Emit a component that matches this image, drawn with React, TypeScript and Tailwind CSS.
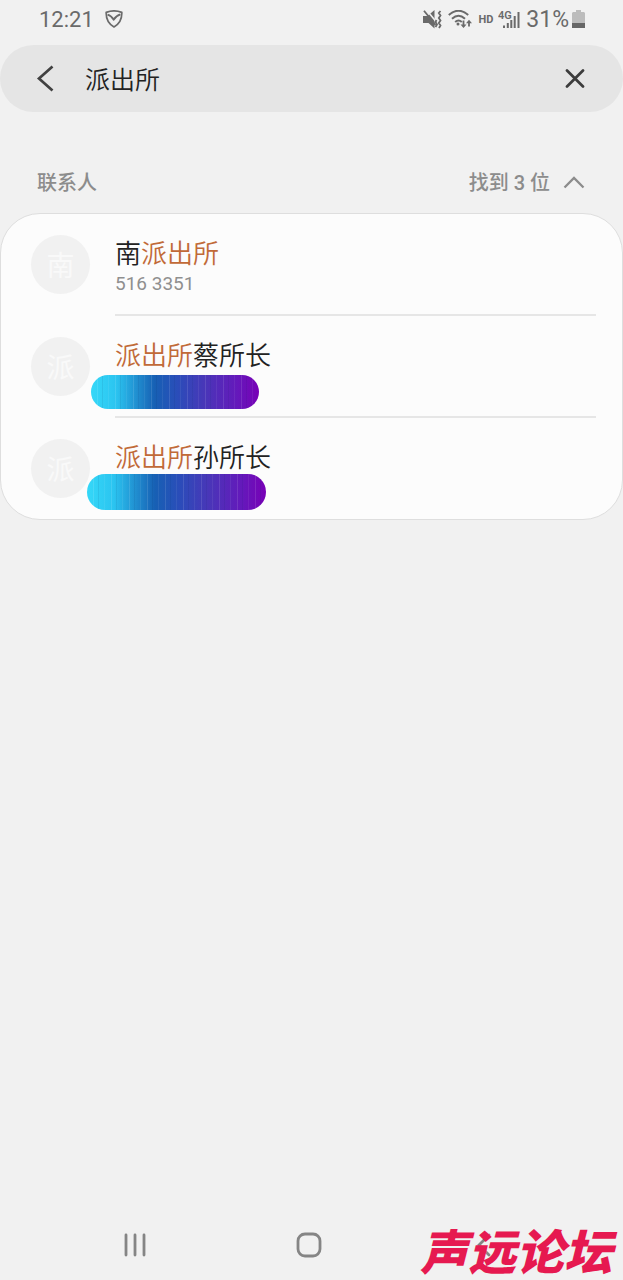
import React, { useState } from 'react';

type Contact = {
  id: string;
  initial: string;
  before?: string;
  match: string;
  after?: string;
  phone?: string;
  mask?: string;
};

const contacts: Contact[] = [
  { id: 'nan', initial: '南', before: '南', match: '派出所', phone: '516 3351' },
  { id: 'cai', initial: '派', match: '派出所', after: '蔡所长', mask: 'left-[90px] top-[59px] h-[34px] w-[168px]' },
  { id: 'sun', initial: '派', match: '派出所', after: '孙所长', mask: 'left-[86px] top-[56px] h-[36px] w-[179px]' },
];

function StatusBar() {
  return (
    <header className="flex h-[45px] items-start justify-between pl-[39px] pr-[38px] pt-[5px] text-[#6a6a6a]">
      <div className="flex h-[29px] items-center gap-[11px]">
        <span className="text-[22px] leading-[29px]">12:21</span>
        <svg className="h-5 w-[18px]" viewBox="0 0 18 20" fill="none" stroke="currentColor" strokeWidth="1.7" strokeLinejoin="round">
          <path d="M1.2 2.4Q9 -.7 16.8 2.4Q17.2 12.4 9 17Q.8 12.4 1.2 2.4Z" />
          <path d="M2.600 4.600Q6.200 5.600 8.600 9.600Q11.600 5.400 15.400 4.400" strokeWidth="2" />
        </svg>
      </div>
      <div className="flex h-[29px] items-center">
        <svg className="h-5 w-[19px]" viewBox="0 0 19 20" fill="none" stroke="currentColor">
          <path d="M0 6H4.500L11.500 0V18.500L5.500 13H0Z" fill="currentColor" stroke="none" />
          <path d="M3.500 0L13 11.500" stroke="#f1f1f1" strokeWidth="1.600" />
          <path d="M1 .8L12.500 15" strokeWidth="1.800" />
          <path d="M13.500 10L12.500 12L14 14.500L12.500 17M17.500 1L15.800 3L17.500 5.500L15.800 8L17.500 10.500L15.800 13L17.500 15.500L16 18" strokeWidth="1.800" />
        </svg>
        <svg className="ml-[6px] h-5 w-6" viewBox="0 0 24 20" fill="none" stroke="currentColor" strokeWidth="2">
          <path d="M.8 5Q10.500-3.500 20.200 5M4 8.700Q10.500 2.700 17 8.700M7.200 12Q10.500 8.900 13.800 12" />
          <circle cx="10" cy="14" r="1.500" fill="currentColor" stroke="none" />
          <path d="M15.500 10.500V16.500M21 16.500V11.500" strokeWidth="1.800" />
          <path d="M12.500 14.500H18.500L15.500 18ZM18 13.300H24L21 9.800Z" fill="currentColor" stroke="none" />
        </svg>
        <span className="ml-[6px] text-[11px] font-bold leading-[26px]">HD</span>
        <svg className="ml-[5px] h-5 w-[22px]" viewBox="0 0 22 20" fill="none" stroke="currentColor" strokeWidth="2">
          <text x="0" y="8.500" fill="currentColor" stroke="none" fontSize="11" fontWeight="600">4G</text>
          <path d="M6 18V15.500M9.800 18V13M13.300 18V10M16.700 18V6M20.500 18V2" />
        </svg>
        <span className="ml-[6px] text-[23px] leading-[30px]">31%</span>
        <svg className="ml-[3px] h-[19px] w-[13px]" viewBox="0 0 13 19">
          <path d="M4 0H9V2H12L13 3V13H0V3L1 2H4Z" fill="#bcbcbc" />
          <path d="M0 13H13V18H0Z" fill="#666" />
        </svg>
      </div>
    </header>
  );
}

function SearchBar() {
  const [query, setQuery] = useState('派出所');
  return (
    <form className="flex h-[67px] items-center rounded-full bg-[#e5e5e5] pl-[33px] pr-[35px]" onSubmit={(e) => e.preventDefault()}>
      <button type="button" aria-label="返回" className="flex h-8 w-6 items-center justify-center text-[#414141]">
        <svg className="h-7 w-5" viewBox="0 0 20 28" fill="none" stroke="currentColor" strokeWidth="2.700">
          <path d="M17.500 1.500L4 13.500L17.500 25.500" />
        </svg>
      </button>
      <input
        aria-label="搜索"
        value={query}
        onChange={(e) => setQuery(e.target.value)}
        className="ml-[28px] min-w-0 flex-1 bg-transparent pt-1 text-[25px] font-[350] leading-8 text-[#222] outline-none"
      />
      <button type="button" aria-label="清除" onClick={() => setQuery('')} className="flex h-8 w-[27px] items-center justify-center text-[#3c3c3c]">
        <svg className="h-5 w-5" viewBox="0 0 20 20" fill="none" stroke="currentColor" strokeWidth="2.700" strokeLinecap="round">
          <path d="M2 1.500L18 17.500M18 1.500L2 17.500" />
        </svg>
      </button>
    </form>
  );
}

function ContactRow({ contact }: { contact: Contact }) {
  return (
    <li className="group relative flex h-[102px] pl-[30px] pr-[26px] last:h-[101px]">
      <div className="mt-[21px] flex h-[59px] w-[59px] shrink-0 items-center justify-center rounded-full bg-[#f1f1f1] pt-1 text-[28px] text-[#f9f9f9]">
        {contact.initial}
      </div>
      <div className="ml-[25px] flex-1 border-b-2 border-[#e6e6e6] pt-[22px] group-last:border-transparent">
        <p className="text-[26px] font-[350] leading-[36px] text-[#222]">
          {contact.before}
          <span className="text-[#c16a38]">{contact.match}</span>
          {contact.after}
        </p>
        {contact.phone && <p className="text-[19px] leading-[24px] text-[#8f8f8f]">{contact.phone}</p>}
      </div>
      {contact.mask && (
        <div className={`absolute overflow-hidden rounded-full bg-linear-[90deg,#35d8f8_0%,#2bc4f0_15%,#1760b4_38%,#2b4cb9_52%,#4936b8_68%,#6518bb_87%,#7800b6_100%] ${contact.mask}`}>
          <div className="h-full bg-[repeating-linear-gradient(90deg,#ffffff00_0px,#ffffff00_6px,#ffffff1c_6px,#ffffff1c_7px,#ffffff00_7px,#ffffff00_11px,#00205014_11px,#00205014_12px,#ffffff00_12px,#ffffff00_17px,#ffffff10_17px,#ffffff10_18px)]" />
        </div>
      )}
    </li>
  );
}

function NavBar() {
  return (
    <nav className="relative mt-auto grid h-[70px] grid-cols-3 pl-12 pr-[52px] text-[#858585]">
      <button type="button" aria-label="最近任务" className="flex items-center justify-center">
        <svg className="h-6 w-6" viewBox="0 0 24 24" stroke="currentColor" strokeWidth="2.800" strokeLinecap="round">
          <path d="M3 2V22M12 2V22M21 2V22" />
        </svg>
      </button>
      <button type="button" aria-label="主屏幕" className="flex items-center justify-center">
        <svg className="h-[26px] w-[26px]" viewBox="0 0 26 26" fill="none" stroke="currentColor" strokeWidth="2.800">
          <rect x="2" y="2" width="22" height="22" rx="7" />
        </svg>
      </button>
      <button type="button" aria-label="后退" className="flex items-center justify-center">
        <svg className="h-6 w-[14px]" viewBox="0 0 14 24" fill="none" stroke="currentColor" strokeWidth="2.800" strokeLinecap="round">
          <path d="M12 2L2 12L12 22" />
        </svg>
      </button>
      <span className="pointer-events-none absolute bottom-0 right-0 whitespace-nowrap pr-[11px] text-[48px] font-black italic leading-[52px] text-[#e61950]">
        声远论坛
      </span>
    </nav>
  );
}

export default function App() {
  const [open, setOpen] = useState(true);
  return (
    <div className="flex min-h-screen flex-col bg-[#f1f1f1] font-[Roboto,'Noto_Sans_CJK_SC',sans-serif]">
      <StatusBar />
      <SearchBar />
      <main className="pt-[56px]">
        <div className="flex h-[45px] items-start justify-between pl-[37px] pr-[38px] text-[20px] font-medium leading-[30px] text-[#8c8c8c]">
          <h2>联系人</h2>
          <button type="button" aria-expanded={open} onClick={() => setOpen(!open)} className="flex items-center gap-[13px]">
            <span>找到 3 位</span>
            <svg className="h-[14px] w-[22px]" viewBox="0 0 22 14" fill="none" stroke="currentColor" strokeWidth="2.300">
              <path d="M1.500 11.500L11 2L20.500 11.500" />
            </svg>
          </button>
        </div>
        {open && (
          <ul className="rounded-[40px] border border-[#dedede] bg-[#fcfcfc]">
            {contacts.map((contact) => (
              <ContactRow key={contact.id} contact={contact} />
            ))}
          </ul>
        )}
      </main>
      <NavBar />
    </div>
  );
}
